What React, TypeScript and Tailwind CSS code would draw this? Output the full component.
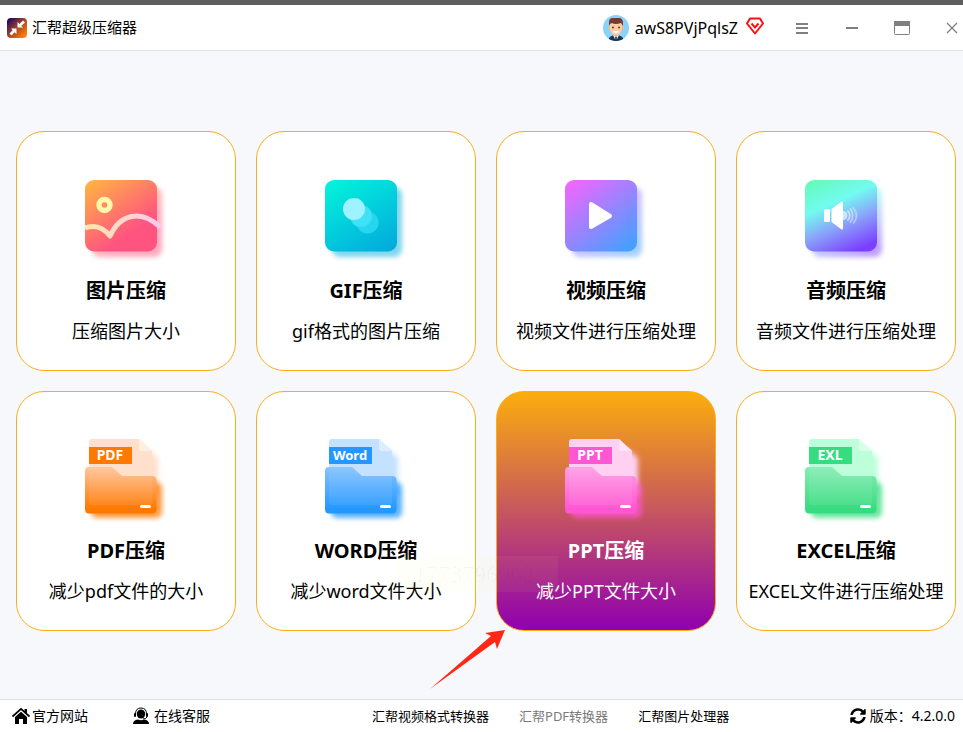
import React from "react";
import { FaSyncAlt } from "react-icons/fa";

const ImageIcon = () => (
  <svg viewBox="0 0 82 90" className="h-[90px] w-[82px]" aria-hidden="true">
    <defs>
      <linearGradient id="img-bg" x1="0" y1="0" x2="0.7" y2="1">
        <stop offset="0" stopColor="#ffb83f" />
        <stop offset="0.8" stopColor="#ff5480" />
      </linearGradient>
      <linearGradient id="img-line" x1="0" y1="0" x2="1" y2="0">
        <stop offset="0" stopColor="#ffe6ac" />
        <stop offset="1" stopColor="#fcc9ea" />
      </linearGradient>
    </defs>
    <rect x="7" y="11" width="70" height="70" rx="8" fill="url(#img-bg)" opacity="0.5" filter="url(#soft)" />
    <rect x="0" y="4" width="72" height="71.500" rx="9" fill="url(#img-bg)" />
    <circle cx="19.500" cy="29" r="5.500" fill="none" stroke="#fff7ab" strokeWidth="5.500" />
    <path
      d="M0 52C11 48 19 52 25 60C35 38 56 33 75 51"
      fill="none"
      stroke="url(#img-line)"
      strokeWidth="5"
      strokeLinejoin="round"
    />
  </svg>
);

const GifIcon = () => (
  <svg viewBox="0 0 82 90" className="h-[90px] w-[82px]" aria-hidden="true">
    <defs>
      <linearGradient id="gif-bg" x1="0.2" y1="0" x2="0.8" y2="1">
        <stop offset="0" stopColor="#03f0dc" />
        <stop offset="1" stopColor="#02acdc" />
      </linearGradient>
    </defs>
    <rect x="7" y="11" width="70" height="70" rx="8" fill="#02acdc" opacity="0.5" filter="url(#soft)" />
    <rect x="0" y="4" width="72" height="71.500" rx="9" fill="url(#gif-bg)" />
    <circle cx="42.500" cy="46.500" r="11" fill="#28d5f1" />
    <circle cx="36" cy="40" r="11" fill="#3fe1f7" />
    <circle cx="29" cy="33" r="11" fill="#9ff2ff" />
  </svg>
);

const VideoIcon = () => (
  <svg viewBox="0 0 82 90" className="h-[90px] w-[82px]" aria-hidden="true">
    <defs>
      <linearGradient id="video-bg" x1="0.1" y1="0" x2="0.9" y2="1">
        <stop offset="0" stopColor="#f266ff" />
        <stop offset="1" stopColor="#3fa2ff" />
      </linearGradient>
    </defs>
    <rect x="7" y="11" width="70" height="70" rx="8" fill="url(#video-bg)" opacity="0.5" filter="url(#soft)" />
    <rect x="0" y="4" width="72" height="71.500" rx="9" fill="url(#video-bg)" />
    <path
      d="M26 28L45 40L26 51Z"
      fill="#fff"
      stroke="#fff"
      strokeWidth="4"
      strokeLinejoin="round"
    />
  </svg>
);

const AudioIcon = () => (
  <svg viewBox="0 0 82 90" className="h-[90px] w-[82px]" aria-hidden="true">
    <defs>
      <linearGradient id="audio-bg" x1="0.25" y1="0" x2="0.7" y2="1">
        <stop offset="0" stopColor="#66fbc0" />
        <stop offset="0.32" stopColor="#72fbf0" />
        <stop offset="0.62" stopColor="#8aa4fa" />
        <stop offset="1" stopColor="#7a3fff" />
      </linearGradient>
    </defs>
    <rect x="7" y="11" width="70" height="70" rx="8" fill="url(#audio-bg)" opacity="0.5" filter="url(#soft)" />
    <rect x="0" y="4" width="72" height="71.500" rx="9" fill="url(#audio-bg)" />
    <rect x="19" y="33" width="6" height="13" rx="1.500" fill="#fff" />
    <path d="M26.500 33L36 26Q38 24.500 38 27V52Q38 55 36 53L26.500 46Z" fill="#fff" />
    <path d="M38 35A4.500 4.500 0 0 1 38 44Z" fill="#fff" opacity="0.6" />
    <g fill="none" stroke="#fff" strokeWidth="1.700" strokeLinecap="round">
      <path d="M43 35Q46.500 39.500 43 44" opacity="0.6" />
      <path d="M45.500 33Q50 39.500 45.500 46" opacity="0.5" />
      <path d="M48.500 32Q54.500 39.500 48.500 47" opacity="0.4" />
    </g>
  </svg>
);

type FileIconProps = {
  label: string;
  color: string;
  page: string;
  fold: string;
  light: string;
};

const FileIcon = ({ label, color, page, fold, light }: FileIconProps) => (
  <svg viewBox="0 0 82 90" className="h-[90px] w-[82px]" aria-hidden="true">
    <defs>
      <linearGradient id={`folder-${label}`} x1="0" y1="0" x2="0" y2="1">
        <stop offset="0" stopColor={light} />
        <stop offset="0.9" stopColor={color} />
      </linearGradient>
    </defs>
    <path d="M20 14H64L73 22V60H20Z" fill={page} filter="url(#soft)" />
    <rect x="6" y="46" width="71" height="36" rx="6" fill={color} opacity="0.75" filter="url(#soft)" />
    <path d="M4 6Q4 3 7 3H54L67 15V60H4Z" fill={page} />
    <path d="M54 3L67 15H57Q54 15 54 12Z" fill={fold} />
    <rect x="4" y="11" width="43" height="17" fill={color} />
    <path
      d="M0 35Q0 31 4 31H27L37 40H67Q71.500 40 71.500 44V73Q71.500 77.500 67 77.500H4Q0 77.500 0 73Z"
      fill={`url(#folder-${label})`}
    />
    <path d="M4 31H27L37 40H67V66Q67 69 64 69H7Q4 69 4 66Z" fill="#fff" opacity="0.07" />
    <rect x="55" y="69" width="11" height="3" rx="1.500" fill="#fff" />
    <text
      x="25"
      y="24"
      textAnchor="middle"
      fill="#fff"
      fontSize={label.length > 3 ? 13 : 14}
      fontWeight="700"
    >
      {label}
    </text>
  </svg>
);

const tools = [
  { title: "图片压缩", text: "压缩图片大小", icon: <ImageIcon /> },
  { title: "GIF压缩", text: "gif格式的图片压缩", icon: <GifIcon /> },
  { title: "视频压缩", text: "视频文件进行压缩处理", icon: <VideoIcon /> },
  { title: "音频压缩", text: "音频文件进行压缩处理", icon: <AudioIcon /> },
  {
    title: "PDF压缩",
    text: "减少pdf文件的大小",
    icon: <FileIcon label="PDF" color="#ff7800" page="#ffe0cc" fold="#ffeee2" light="#ffc59b" />,
  },
  {
    title: "WORD压缩",
    text: "减少word文件大小",
    icon: <FileIcon label="Word" color="#2498ff" page="#c4e1ff" fold="#dceeff" light="#85c3ff" />,
  },
  {
    title: "PPT压缩",
    text: "减少PPT文件大小",
    icon: <FileIcon label="PPT" color="#ff57d3" page="#ffd0f2" fold="#ffe3f8" light="#ff9ee5" />,
    active: true,
  },
  {
    title: "EXCEL压缩",
    text: "EXCEL文件进行压缩处理",
    icon: <FileIcon label="EXL" color="#38dc80" page="#bdffda" fold="#d9ffea" light="#86edb4" />,
  },
];

const Logo = () => (
  <svg viewBox="0 0 20 20" className="h-5 w-5" aria-hidden="true">
    <defs>
      <linearGradient id="logo-bg" x1="0.1" y1="0.1" x2="0.9" y2="0.9">
        <stop offset="0" stopColor="#260a5c" />
        <stop offset="0.5" stopColor="#a8452b" />
        <stop offset="1" stopColor="#ff8500" />
      </linearGradient>
    </defs>
    <rect width="20" height="20" rx="4" fill="url(#logo-bg)" />
    <path d="M10.500 4V9.500H16L14.300 7.800L18 4.500L16 2.500L12.500 6Z" fill="#fff" />
    <path d="M9.500 16V10.500H4L5.700 12.200L2.500 15.500L4.500 17.500L7.500 14.200Z" fill="#fff" />
  </svg>
);

const Avatar = () => (
  <svg viewBox="0 0 26 26" className="h-[26px] w-[26px]" aria-hidden="true">
    <defs>
      <clipPath id="avatar-clip">
        <circle cx="13" cy="13" r="13" />
      </clipPath>
    </defs>
    <g clipPath="url(#avatar-clip)">
      <rect width="26" height="26" fill="#86d4fb" />
      <path d="M6 26V23Q7 21 10 20.500H16Q19 21 20 23V26Z" fill="#1c3550" />
      <path d="M10 20L13 26L16 20Z" fill="#fff" />
      <path d="M12.300 21.500H13.700L14 26H12Z" fill="#1c3550" />
      <rect x="10.500" y="17" width="5" height="4" fill="#eeb28e" />
      <circle cx="6" cy="13" r="1.500" fill="#f5b896" />
      <circle cx="20" cy="13" r="1.500" fill="#f5b896" />
      <path d="M7 8H19V14Q18 20 13 20Q8 20 7 14Z" fill="#ffcba5" />
      <path d="M6 11V7Q6 3 10 3H17Q20 4 20 8V11L18 8Q12 10 9 8L7 9Z" fill="#723c2a" />
      <circle cx="10" cy="12.500" r="1" fill="#593729" />
      <circle cx="16" cy="12.500" r="1" fill="#593729" />
      <path d="M10 16H16Q15 18.500 13 18.500Q11 18.500 10 16Z" fill="#fff" />
    </g>
  </svg>
);

const VipBadge = () => (
  <svg viewBox="0 0 18 18" className="mb-1 h-[18px] w-[18px]" fill="none" stroke="#ff1010" aria-hidden="true">
    <path d="M4 1.500H14L17 6.500L9 16.500L1 6.500Z" strokeWidth="2" strokeLinejoin="round" />
    <path d="M5.500 6.500L9 10.500L12.500 6.500" strokeWidth="2" />
  </svg>
);

const HomeIcon = () => (
  <svg viewBox="0 0 18 18" className="h-[18px] w-[18px]" aria-hidden="true">
    <path d="M0.500 9.500L9 1.800L17.500 9.500" fill="none" stroke="#000" strokeWidth="1.700" />
    <path d="M12.500 2H15V6.500L12.500 4.500Z" />
    <path d="M3 10L9 4.700L15 10V17H11V12H7V17H3Z" />
  </svg>
);

const SupportIcon = () => (
  <svg viewBox="0 0 18 18" className="h-[18px] w-[18px]" aria-hidden="true">
    <path d="M3.500 7Q3.500 1 9 1Q14.500 1 14.500 7" fill="none" stroke="#000" />
    <rect x="2" y="6" width="2" height="4" rx="1" />
    <rect x="14" y="6" width="2" height="4" rx="1" />
    <ellipse cx="9" cy="7" rx="4.200" ry="4.500" />
    <path d="M1 17Q1 13 6 12.500Q9 14 12 12.500Q17 13 17 17Z" />
    <path d="M15 10Q14 12 11 12" fill="none" stroke="#000" />
  </svg>
);

const Arrow = () => (
  <svg
    viewBox="0 0 76 60"
    className="absolute top-[239px] left-[-66px] h-[60px] w-[76px]"
    aria-hidden="true"
  >
    <path d="M0 59L61 6L55 3L75 0L67 19L65 12Z" fill="#ff2715" />
  </svg>
);

const Watermark = () => (
  <span className="pointer-events-none absolute top-[165px] left-[-98px] h-9 w-40 bg-[#ffff80]/5 pl-4 font-['Liberation_Serif',serif] text-2xl/9 text-black/3">
    1773796962
  </span>
);

const Header = () => (
  <header className="flex h-[46px] items-center border-b border-[#e3e4e7] bg-white pr-[3px] pl-[7px]">
    <Logo />
    <h1 className="ml-[5px] text-[15px]">汇帮超级压缩器</h1>
    <div className="ml-auto flex items-center">
      <Avatar />
      <span className="mr-2 ml-1.5 text-base">awS8PVjPqlsZ</span>
      <VipBadge />
    </div>
    <div className="ml-[30px] flex items-center gap-[34px] text-[#808080]">
      <button type="button" aria-label="菜单" className="h-4 w-4">
        <svg viewBox="0 0 16 16" fill="none" stroke="currentColor" strokeWidth="2">
          <path d="M2 4H14M2 8H14M2 13H14" />
        </svg>
      </button>
      <button type="button" aria-label="最小化" className="h-4 w-4">
        <svg viewBox="0 0 16 16" fill="none" stroke="currentColor" strokeWidth="2">
          <path d="M2 8H14" />
        </svg>
      </button>
      <button type="button" aria-label="最大化" className="h-4 w-4">
        <svg viewBox="0 0 16 16" fill="none" stroke="currentColor">
          <rect x="0.500" y="1.500" width="15" height="13" rx="1" />
          <path d="M0 3.500H16" strokeWidth="5" />
        </svg>
      </button>
      <button type="button" aria-label="关闭" className="h-4 w-4">
        <svg viewBox="0 0 16 16" fill="none" stroke="currentColor" strokeWidth="1.300">
          <path d="M3 3L13 13M13 3L3 13" />
        </svg>
      </button>
    </div>
  </header>
);

const Footer = () => (
  <footer className="flex h-[33px] items-center border-t border-[#e0e2e5] bg-white pr-2 pl-3 text-sm">
    <a href="#site" className="flex items-center gap-0.5">
      <HomeIcon />
      官方网站
    </a>
    <a href="#support" className="ml-11 flex items-center gap-1">
      <SupportIcon />
      在线客服
    </a>
    <nav className="ml-[162px] flex gap-[30px] text-[13px]">
      <a href="#video">汇帮视频格式转换器</a>
      <a href="#pdf" className="text-[#7a7a7a]">
        汇帮PDF转换器
      </a>
      <a href="#image">汇帮图片处理器</a>
    </nav>
    <div className="ml-auto flex items-center gap-1">
      <FaSyncAlt className="h-4 w-4" />
      <span>版本：4.2.0.0</span>
    </div>
  </footer>
);

export default function App() {
  return (
    <div className="flex min-h-screen flex-col border-t-5 border-[#5e5e5e] bg-[#f7f8fc] font-['Noto_Sans','Noto_Sans_CJK_SC',sans-serif] text-black">
      {/* blur shared by the icon shadows */}
      <svg className="absolute h-0 w-0" aria-hidden="true">
        <filter id="soft" x="-20%" y="-20%" width="140%" height="140%">
          <feGaussianBlur stdDeviation="2.500" />
        </filter>
      </svg>
      <Header />
      <main className="flex-1 pt-20 pr-[7px] pb-8 pl-4">
        <ul className="grid grid-cols-4 gap-5">
          {tools.map((tool) => (
            <li key={tool.title} className="relative">
              <button
                type="button"
                className={
                  tool.active
                    ? "flex h-60 w-full flex-col items-center rounded-[28px] border border-[#fbad17] bg-linear-to-b/srgb from-[#fcad0d] to-[#9000b0] pt-11 text-white"
                    : "flex h-60 w-full flex-col items-center rounded-[28px] border border-[#fbad17] bg-white pt-11"
                }
              >
                {tool.icon}
                <span className="mt-[11px] text-xl/7 font-bold">{tool.title}</span>
                <span className="mt-3 text-lg/7 whitespace-nowrap">{tool.text}</span>
              </button>
              {tool.active && <Arrow />}
              {tool.active && <Watermark />}
            </li>
          ))}
        </ul>
      </main>
      <Footer />
    </div>
  );
}
